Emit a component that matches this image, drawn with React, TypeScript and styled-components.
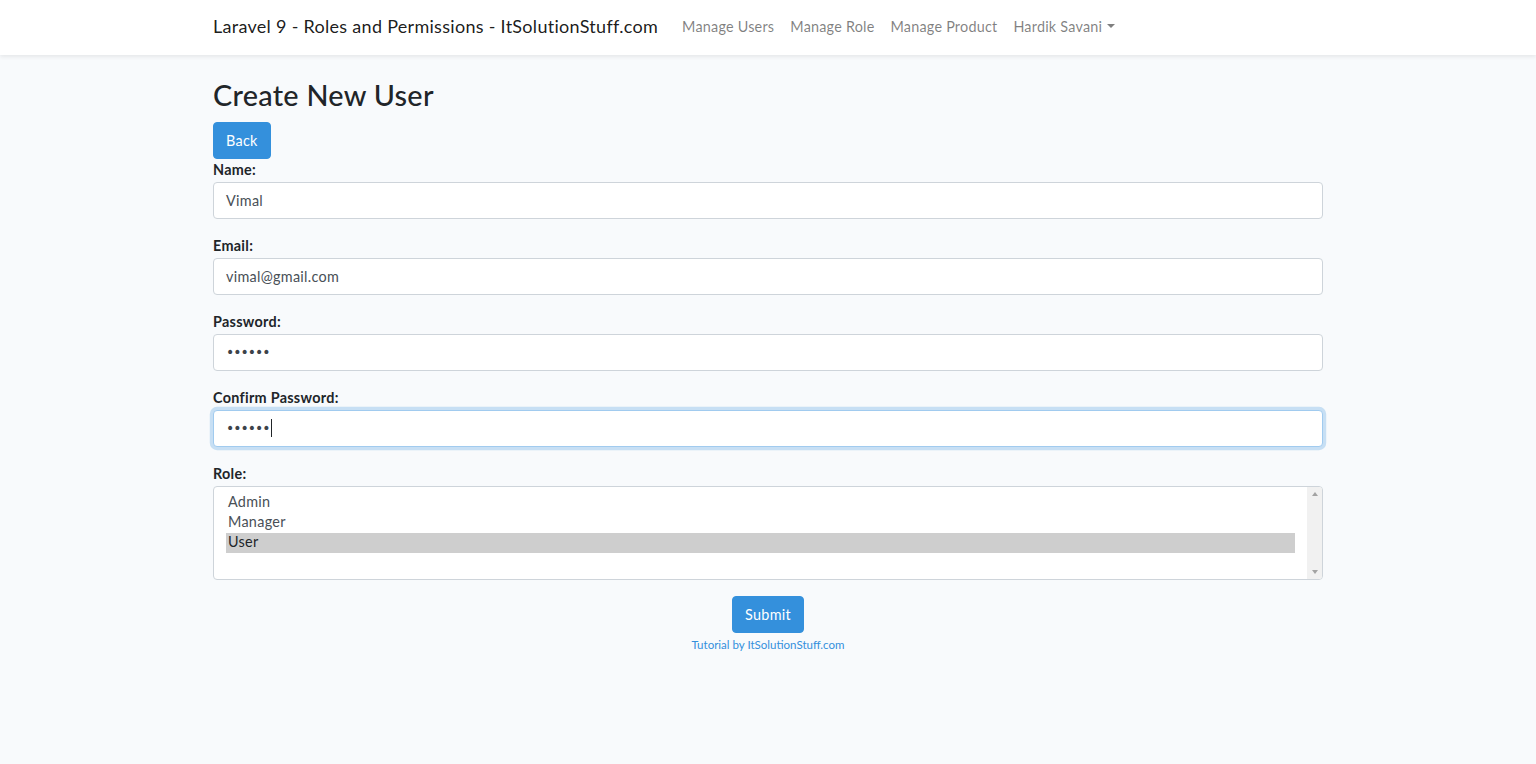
import styled, { createGlobalStyle } from 'styled-components'

const GlobalStyle = createGlobalStyle`
  * { box-sizing: border-box; }
  body {
    margin: 0;
    background: #f8fafc;
    font-family: Lato, "Noto Sans", sans-serif;
    font-size: 14.4px;
    line-height: 1.6;
    letter-spacing: 0.02em;
    color: #212529;
  }
`

const Navbar = styled.header`
  background: #fff;
  box-shadow: 0 2px 4px rgba(0, 0, 0, 0.075);
  padding: 8px 16px;
`

const Container = styled.div`
  max-width: 1140px;
  margin: 0 auto;
  padding: 0 15px;
`

const NavInner = styled(Container)`
  display: flex;
  align-items: center;
`

const Brand = styled.a`
  font-size: 18px;
  padding: 4px 0 6px;
  margin-right: 16px;
  color: rgba(0, 0, 0, 0.9);
  text-decoration: none;
`

const NavList = styled.nav`
  display: flex;
`

const NavLink = styled.a<{ $dropdown?: boolean }>`
  padding: 7px 8px 9px;
  color: rgba(0, 0, 0, 0.5);
  text-decoration: none;
  letter-spacing: 0.015em;

  ${({ $dropdown }) =>
    $dropdown &&
    `
    &::after {
      content: '';
      display: inline-block;
      margin-left: 0.35em;
      vertical-align: 0.255em;
      border-top: 0.3em solid;
      border-right: 0.3em solid transparent;
      border-left: 0.3em solid transparent;
    }
  `}
`

const Main = styled.main`
  padding: 24px 0;
`

const Title = styled.h2`
  margin: 0 0 8px;
  font-size: 28.8px;
  font-weight: 500;
  line-height: 1.2;
  position: relative;
  top: -1px;
`

const Actions = styled.div<{ $center?: boolean }>`
  display: flex;
  justify-content: ${({ $center }) => ($center ? 'center' : 'flex-start')};
`

const Button = styled.button`
  display: inline-block;
  padding: 6px 12px;
  font-family: inherit;
  font-size: 14.4px;
  line-height: 1.6;
  letter-spacing: inherit;
  color: #fff;
  background: #3490dc;
  border: 1px solid #3490dc;
  border-radius: 4px;
`

const FormGroup = styled.div`
  margin-bottom: 16px;
`

const Label = styled.strong`
  display: block;
  font-weight: 700;
  line-height: 22px;
  padding-bottom: 1px;
`

const Field = styled.div<{ $focused?: boolean }>`
  display: flex;
  align-items: center;
  height: 37px;
  padding: 6px 12px;
  background: #fff;
  color: #495057;
  border: 1px solid ${({ $focused }) => ($focused ? '#a1cbef' : '#ced4da')};
  border-radius: 4px;
  box-shadow: ${({ $focused }) => ($focused ? '0 0 0 3.2px rgba(52, 144, 220, 0.25)' : 'none')};
`

const Dots = styled.span`
  font-family: "DejaVu Sans", sans-serif;
  font-size: 14px;
  letter-spacing: -1px;
  color: #3d434a;
`

const Caret = styled.span`
  display: inline-block;
  width: 1px;
  height: 18px;
  margin-left: 1px;
  background: #212529;
`

const ListBox = styled.div`
  display: flex;
  height: 94px;
  background: #fff;
  border: 1px solid #ced4da;
  border-radius: 4px;
  overflow: hidden;
`

const Options = styled.ul`
  flex: 1;
  list-style: none;
  margin: 0;
  padding: 6px 12px;
`

const Option = styled.li<{ $selected?: boolean }>`
  height: 20px;
  padding: 0 2px 1px;
  line-height: 18px;
  color: ${({ $selected }) => ($selected ? '#212529' : '#495057')};
  background: ${({ $selected }) => ($selected ? '#cecece' : 'transparent')};
`

const Scrollbar = styled.div`
  width: 15px;
  background: #f1f1f1;
  display: flex;
  flex-direction: column;
  justify-content: space-between;
  align-items: center;
  padding: 5px 0;
`

const Arrow = styled.span<{ $down?: boolean }>`
  width: 0;
  height: 0;
  border-left: 3.5px solid transparent;
  border-right: 3.5px solid transparent;
  ${({ $down }) => ($down ? 'border-top' : 'border-bottom')}: 4px solid #a3a3a3;
`

const Credit = styled.p`
  margin: 0;
  text-align: center;
  color: #3490dc;
  font-size: 11.52px;
  line-height: 23px;
  letter-spacing: 0;
`

const fields = [
  { label: 'Name:', value: 'Vimal' },
  { label: 'Email:', value: 'vimal@gmail.com' },
  { label: 'Password:', value: '••••••', secret: true },
  { label: 'Confirm Password:', value: '••••••', secret: true, focused: true },
]

const roles = ['Admin', 'Manager', 'User']

export default function App() {
  return (
    <>
      <GlobalStyle />
      <Navbar>
        <NavInner>
          <Brand href="#">Laravel 9 - Roles and Permissions - ItSolutionStuff.com</Brand>
          <NavList>
            <NavLink href="#">Manage Users</NavLink>
            <NavLink href="#">Manage Role</NavLink>
            <NavLink href="#">Manage Product</NavLink>
            <NavLink href="#" $dropdown>Hardik Savani</NavLink>
          </NavList>
        </NavInner>
      </Navbar>

      <Main>
        <Container>
          <Title>Create New User</Title>
          <Actions>
            <Button>Back</Button>
          </Actions>

          {fields.map((f) => (
            <FormGroup key={f.label}>
              <Label>{f.label}</Label>
              <Field $focused={f.focused}>
                {f.secret ? <Dots>{f.value}</Dots> : f.value}
                {f.focused && <Caret />}
              </Field>
            </FormGroup>
          ))}

          <FormGroup>
            <Label>Role:</Label>
            <ListBox>
              <Options>
                {roles.map((r) => (
                  <Option key={r} $selected={r === 'User'}>{r}</Option>
                ))}
              </Options>
              <Scrollbar>
                <Arrow />
                <Arrow $down />
              </Scrollbar>
            </ListBox>
          </FormGroup>

          <Actions $center>
            <Button>Submit</Button>
          </Actions>
          <Credit>Tutorial by ItSolutionStuff.com</Credit>
        </Container>
      </Main>
    </>
  )
}
